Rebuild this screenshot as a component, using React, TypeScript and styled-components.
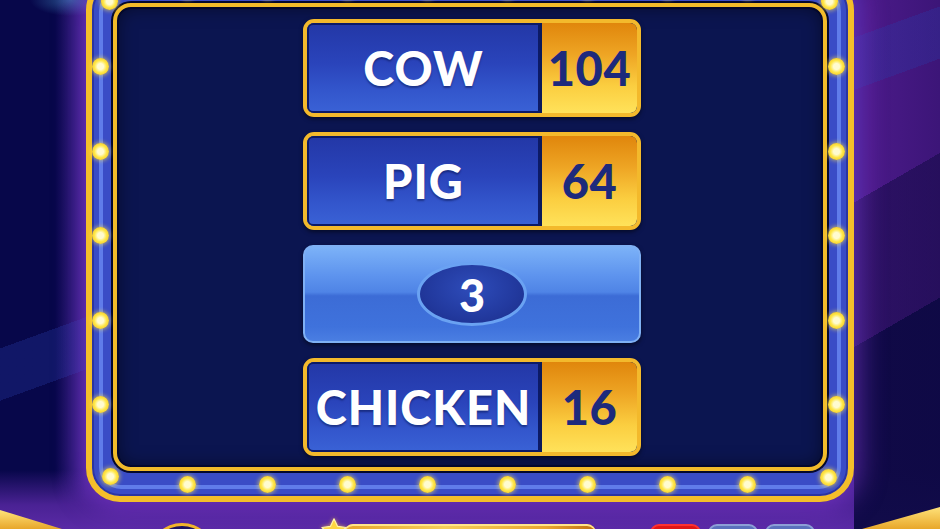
import React from "react";
import styled, { createGlobalStyle } from "styled-components";

const GlobalStyle = createGlobalStyle`
  html, body { margin: 0; padding: 0; background: #0a0a46; overflow: hidden; }
  #root { width: 940px; height: 529px; }
`;

const Stage = styled.div`
  position: relative;
  width: 940px;
  height: 529px;
  overflow: hidden;
  display: flex;
  flex-direction: column;
  font-family: Lato, "Open Sans", sans-serif;
  background:
    radial-gradient(ellipse 40px 16px at 70px 0px, rgba(80, 170, 220, 0.45), transparent 100%),
    linear-gradient(160deg, transparent 0 40%, rgba(40, 60, 170, 0.3) 40% 46%, transparent 46% 100%),
    linear-gradient(to bottom, transparent 0 470px, #4a2294 505px, #5a2aa6 529px),
    linear-gradient(to right, #07074a 0 55px, #3b1f8a 86px, #3b1f8a 854px, #4a1a88 870px, #3c1578 940px),
    #0a0a46;
`;

const RightShade = styled.div`
  position: absolute;
  right: 0;
  top: 0;
  width: 86px;
  height: 529px;
  background:
    linear-gradient(150deg, transparent 0 35%, rgba(20, 10, 70, 0.55) 35% 60%, rgba(10, 8, 64, 0.9) 60% 100%);
  pointer-events: none;
`;

const FrameWrap = styled.div`
  position: relative;
  margin: -24px 0 0 86px;
  width: 768px;
  height: 526px;
  flex: none;
  border-radius: 34px;
  box-shadow: 0 0 26px 6px rgba(140, 60, 220, 0.55);
`;

const Frame = styled.div`
  position: relative;
  box-sizing: border-box;
  width: 100%;
  height: 100%;
  border: 6px solid #f4bf2a;
  border-radius: 34px;
  padding: 21px 21px 25px 21px;
  background: #3a4cc6;
  box-shadow: inset 0 0 0 2px #2b35a2;

  &::before {
    content: "";
    position: absolute;
    inset: 7px;
    border-radius: 22px;
    border: 4px solid rgba(110, 140, 245, 0.75);
    pointer-events: none;
  }
`;

const Panel = styled.div`
  position: relative;
  box-sizing: border-box;
  height: 100%;
  border: 4px solid #f2bb2a;
  border-radius: 18px;
  box-shadow: 0 0 0 2px #04082c, inset 0 0 0 2px #04082c, inset 0 0 18px rgba(0, 0, 0, 0.5);
  background: #0b1550;
  display: flex;
  flex-direction: column;
  align-items: center;
  padding: 12px 0 0 4px;
  gap: 15px;
`;

const Light = styled.div`
  width: 17px;
  height: 17px;
  border-radius: 50%;
  flex: none;
  background: radial-gradient(circle at 50% 50%, #fffbd0 0 25%, #ffe84a 50%, #f0c020 85%, #d9a010 100%);
  box-shadow: 0 0 4px 1px rgba(255, 230, 80, 0.6);
`;

const HStrip = styled.div<{ $top: number }>`
  position: absolute;
  left: 93px;
  top: ${(p) => p.$top}px;
  display: flex;
  gap: 63px;
`;

const VStrip = styled.div<{ $left: number }>`
  position: absolute;
  top: 82px;
  left: ${(p) => p.$left}px;
  display: flex;
  flex-direction: column;
  gap: 67.5px;
`;

const CornerLight = styled(Light)<{ $pos: string }>`
  position: absolute;
  ${(p) => p.$pos}
`;

const Row = styled.div`
  box-sizing: border-box;
  width: 338px;
  height: 98px;
  flex: none;
  border: 4px solid #f3b92c;
  border-radius: 11px;
  display: flex;
  overflow: hidden;
  background: #0a1a5a;
  box-shadow: 0 2px 4px rgba(0, 0, 0, 0.5);
`;

const AnswerCell = styled.div`
  flex: 1;
  display: flex;
  align-items: center;
  justify-content: center;
  border-radius: 6px 0 0 6px;
  background: linear-gradient(to bottom, #2337a6 0%, #2a44bb 45%, #3356cc 75%, #3a62d6 100%);
  box-shadow: inset 0 0 0 2px #0c1a66;
  color: #ffffff;
  font-weight: 900;
  font-size: 47px;
  letter-spacing: 1px;
  text-shadow: 0 2px 2px rgba(0, 10, 60, 0.45);
  white-space: nowrap;
`;

const ScoreCell = styled.div`
  width: 95px;
  flex: none;
  display: flex;
  align-items: center;
  justify-content: center;
  margin-left: 2px;
  border-radius: 0 6px 6px 0;
  background: linear-gradient(to bottom, #e0860c 0%, #eea524 35%, #fbce40 70%, #ffe25a 100%);
  color: #1d2a7c;
  font-weight: 900;
  font-size: 47px;
  letter-spacing: 0.5px;
`;

const HiddenRow = styled.div`
  box-sizing: border-box;
  width: 338px;
  height: 98px;
  flex: none;
  border-radius: 10px;
  border: 2px solid #7fb0f4;
  background: linear-gradient(to bottom, #7cb2f8 0%, #5e94ee 30%, #4f84e6 48%, #3c6cd6 52%, #3f72dc 85%, #4a7ee2 100%);
  display: flex;
  align-items: center;
  justify-content: center;
  box-shadow: 0 2px 4px rgba(0, 0, 0, 0.5);
`;

const Oval = styled.div`
  width: 110px;
  height: 64px;
  box-sizing: border-box;
  border-radius: 50%;
  border: 3px solid #6aa2f2;
  background: radial-gradient(ellipse at 50% 40%, #2e4cba 0%, #22399e 60%, #1a2c88 100%);
  display: flex;
  align-items: center;
  justify-content: center;
  color: #ffffff;
  font-weight: 900;
  font-size: 45px;
  padding-top: 2px;
`;

const BottomBar = styled.div`
  position: relative;
  flex: none;
  height: 27px;
  min-height: 0;
  overflow: hidden;
  display: flex;
  align-items: flex-start;
  padding-top: 19px;
  box-sizing: border-box;
`;

const GoldWedge = styled.div<{ $side: "left" | "right" }>`
  position: absolute;
  bottom: 0;
  ${(p) => (p.$side === "left" ? "left: 0;" : "right: 0;")}
  width: ${(p) => (p.$side === "left" ? "62px" : "78px")};
  height: ${(p) => (p.$side === "left" ? "19px" : "22px")};
  background: linear-gradient(to bottom, #ffe27a, #e8a72a);
  clip-path: ${(p) =>
    p.$side === "left"
      ? "polygon(0 0, 100% 100%, 0 100%)"
      : "polygon(100% 0, 100% 100%, 0 100%)"};
`;

const Ring = styled.div`
  margin-left: 150px;
  width: 64px;
  height: 60px;
  flex: none;
  box-sizing: border-box;
  border-radius: 50%;
  border: 3px solid #f2b52a;
  background: #1c1260;
  margin-top: 2px;
`;

const StarIcon = styled.svg`
  flex: none;
  margin-left: 106px;
  margin-top: -4px;
  filter: drop-shadow(0 0 2px rgba(255, 200, 60, 0.7));
`;

const GoldBar = styled.div`
  margin-left: -4px;
  width: 252px;
  height: 24px;
  flex: none;
  border-radius: 9px;
  background: linear-gradient(to right, #e7a42c, #f6ce5a 40%, #e9a630 80%, #c07012);
  box-shadow: inset 0 2px 0 #ffe58a;
  margin-top: 3px;
`;

const Btn = styled.div<{ $red?: boolean; $ml: number }>`
  margin-left: ${(p) => p.$ml}px;
  width: ${(p) => (p.$red ? 51 : 50)}px;
  height: 24px;
  flex: none;
  margin-top: 3px;
  box-sizing: border-box;
  border-radius: 9px;
  background: ${(p) => (p.$red ? "#e01616" : "#5a70bc")};
  border: 2px solid ${(p) => (p.$red ? "#ff3030" : "#8c9fd6")};
`;

const lights = (n: number) => Array.from({ length: n }, (_, i) => <Light key={i} />);

const rows = [
  { answer: "COW", score: "104" },
  { answer: "PIG", score: "64" },
  null,
  { answer: "CHICKEN", score: "16" },
];

export default function App() {
  return (
    <>
      <GlobalStyle />
      <Stage>
        <RightShade />
        <FrameWrap>
          <Frame>
            <Panel>
              {rows.map((r, i) =>
                r ? (
                  <Row key={i}>
                    <AnswerCell>{r.answer}</AnswerCell>
                    <ScoreCell>{r.score}</ScoreCell>
                  </Row>
                ) : (
                  <HiddenRow key={i}>
                    <Oval>3</Oval>
                  </HiddenRow>
                )
              )}
            </Panel>
          </Frame>
          <HStrip $top={6}>{lights(8)}</HStrip>
          <HStrip $top={500}>{lights(8)}</HStrip>
          <VStrip $left={6}>{lights(5)}</VStrip>
          <VStrip $left={742}>{lights(5)}</VStrip>
          <CornerLight $pos="left: 15px; top: 17px;" />
          <CornerLight $pos="right: 16px; top: 17px;" />
          <CornerLight $pos="left: 16px; bottom: 17px;" />
          <CornerLight $pos="right: 17px; bottom: 16px;" />
        </FrameWrap>
        <BottomBar>
          <GoldWedge $side="left" />
          <Ring />
          <StarIcon width="28" height="28" viewBox="0 0 24 24">
            <path
              d="M12 1.5l3.1 6.6 7.2.9-5.3 5 1.4 7.1L12 17.6l-6.4 3.5 1.4-7.1-5.3-5 7.2-.9z"
              fill="#ffd640"
              stroke="#fff4a8"
              strokeWidth="1"
              strokeLinejoin="round"
            />
          </StarIcon>
          <GoldBar />
          <Btn $red $ml={54} />
          <Btn $ml={7} />
          <Btn $ml={7} />
          <GoldWedge $side="right" />
        </BottomBar>
      </Stage>
    </>
  );
}
